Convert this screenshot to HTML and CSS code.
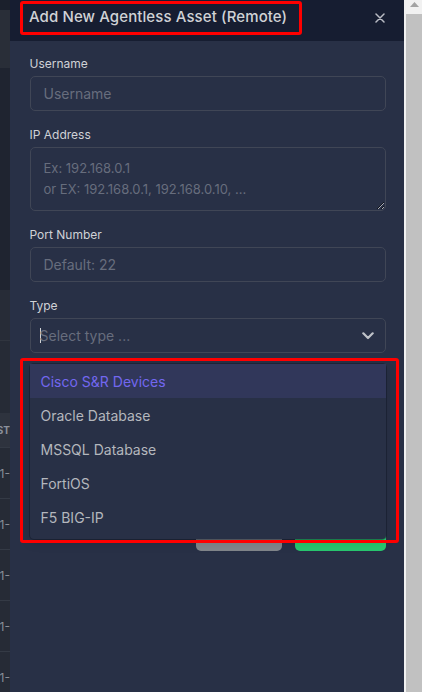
FILE: index.html
```html
<!DOCTYPE html>
<html lang="en">
<head>
<meta charset="utf-8">
<title>Add New Agentless Asset (Remote)</title>
<link rel="stylesheet" href="styles.css">
</head>
<body>
<div class="screen">
  <div class="bg-page">
    <div class="bg-top"></div>
    <div class="bg-bar"></div>
    <div class="bg-panel"></div>
    <div class="bg-sec1"></div>
    <div class="bg-sec2"></div>
    <div class="bg-th"><span>LAST</span></div>
    <div class="bg-row"><span>2023-11-</span></div>
    <div class="bg-row"><span>2023-11-</span></div>
    <div class="bg-row"><span>2023-11-</span></div>
    <div class="bg-row"><span>2023-11-</span></div>
    <div class="bg-row"><span>2023-11-</span></div>
  </div>

  <div class="modal">
    <div class="modal-header">
      <h5 class="modal-title">Add New Agentless Asset (Remote)</h5>
      <button class="close" type="button" aria-label="Close">
        <svg width="10" height="10" viewBox="0 0 10 10"><path d="M1 1L9 9M9 1L1 9" stroke="#b9bcc4" stroke-width="1.5" stroke-linecap="round"/></svg>
      </button>
    </div>
    <div class="modal-body">
      <div class="form-group">
        <label class="form-label">Username</label>
        <input class="form-control" type="text" placeholder="Username">
      </div>
      <div class="form-group">
        <label class="form-label">IP Address</label>
        <textarea class="form-control textarea" placeholder="Ex: 192.168.0.1&#10;or EX: 192.168.0.1, 192.168.0.10, ..."></textarea>
      </div>
      <div class="form-group">
        <label class="form-label">Port Number</label>
        <input class="form-control" type="text" placeholder="Default: 22">
      </div>
      <div class="form-group">
        <label class="form-label">Type</label>
        <div class="select">
          <span class="caret"></span>
          <span class="select-placeholder">Select type ...</span>
          <svg class="chevron" width="12" height="8" viewBox="0 0 12 8"><path d="M1.3 1.3L6 6L10.7 1.3" fill="none" stroke="#bfc2c8" stroke-width="2.2" stroke-linecap="round" stroke-linejoin="round"/></svg>
          <div class="menu">
            <div class="option option-active">Cisco S&amp;R Devices</div>
            <div class="option">Oracle Database</div>
            <div class="option">MSSQL Database</div>
            <div class="option">FortiOS</div>
            <div class="option">F5 BIG-IP</div>
          </div>
        </div>
      </div>
      <div class="form-actions">
        <button class="btn btn-secondary" type="button">Cancel</button>
        <button class="btn btn-success" type="button">Submit</button>
      </div>
    </div>
    <div class="annot annot-title"></div>
    <div class="annot annot-menu"></div>
  </div>

  <div class="scrollbar">
    <div class="sb-arrow"><svg width="9" height="5" viewBox="0 0 9 5"><path d="M0 5L4.5 0L9 5Z" fill="#a3a3a3"/></svg></div>
    <div class="sb-thumb"></div>
  </div>
</div>
</body>
</html>
```

FILE: styles.css
```css
* { box-sizing: border-box; }

html, body {
  margin: 0;
  padding: 0;
  overflow: hidden;
}

body {
  font-family: "Inter", "Open Sans", sans-serif;
  background: #161d31;
}

.screen {
  display: flex;
  height: 692px;
  width: 422px;
}

/* page visible behind the modal backdrop */
.bg-page {
  width: 10px;
  flex: 0 0 10px;
  display: flex;
  flex-direction: column;
  overflow: hidden;
  background: #232833;
}
.bg-page > div { flex-shrink: 0; }
.bg-top { height: 10px; background: #1b202c; }
.bg-bar { height: 58px; background: #292e38; }
.bg-panel { height: 222px; background: #1f2430; }
.bg-sec1 { height: 51px; background: #272c37; border-bottom: 1px solid #30353f; }
.bg-sec2 { height: 72px; background: #262b36; }
.bg-th,
.bg-row {
  display: flex;
  justify-content: flex-end;
  align-items: center;
  white-space: nowrap;
}
.bg-th {
  height: 34px;
  background: #2e333e;
  font-size: 10px;
  font-weight: 700;
  color: #8c919b;
}
.bg-row {
  height: 51px;
  border-top: 1px solid #343a45;
  background: #262b36;
  font-size: 12px;
  color: #8a8f98;
}

/* modal */
.modal {
  position: relative;
  width: 394px;
  flex: 0 0 394px;
  background: #283046;
  display: flex;
  flex-direction: column;
}

.modal-header {
  height: 41px;
  flex: 0 0 41px;
  background: #161d31;
  display: flex;
  align-items: flex-start;
  justify-content: space-between;
  padding: 7px 18px 0 19px;
}

.modal-title {
  margin: 0;
  font-size: 15px;
  line-height: 20px;
  font-weight: 500;
  color: #d0d2d6;
  letter-spacing: 0.1px;
}

.close {
  background: none;
  border: 0;
  padding: 0;
  margin: 6px 1px 0 0;
  width: 10px;
  height: 10px;
  display: flex;
  cursor: pointer;
}

.modal-body {
  padding: 14px 18.5px 0 19.5px;
  flex: 1;
}

.form-group {
  margin-bottom: 15px;
}

.form-label {
  display: block;
  font-size: 12px;
  line-height: 18px;
  margin-bottom: 3px;
  color: #d0d2d6;
}

.form-control {
  display: block;
  width: 100%;
  height: 35px;
  border: 1px solid #404656;
  border-radius: 5px;
  background: transparent;
  padding: 0 13px;
  font-family: inherit;
  font-size: 14px;
  color: #d0d2d6;
  outline: none;
}

.form-control::placeholder {
  color: #676d7d;
  opacity: 1;
}

.textarea {
  height: 64px;
  padding: 10px 13px;
  line-height: 21px;
  font-size: 13px;
  resize: vertical;
  color-scheme: dark;
}

.select {
  position: relative;
  height: 35px;
  border: 1px solid #404656;
  border-radius: 5px;
  display: flex;
  align-items: center;
  padding: 0 11px 0 9px;
}

.caret {
  width: 1px;
  height: 15px;
  background: #d0d2d6;
  margin-right: -1px;
}

.select-placeholder {
  flex: 1;
  font-size: 14px;
  color: #676d7d;
}

.chevron {
  display: block;
}

.menu {
  position: absolute;
  left: -1px;
  right: -1px;
  top: calc(100% + 12px);
  background: #283046;
  border-radius: 4px;
  padding: 0 0 5px;
  box-shadow: 0 0 0 1px rgba(10, 14, 25, 0.35), 0 4px 11px rgba(0, 0, 0, 0.12);
  z-index: 5;
}

.option {
  height: 34px;
  display: flex;
  align-items: center;
  padding: 0 11px;
  font-size: 14px;
  color: #b4b7bd;
}

.option-active {
  background: #31375a;
  color: #7367f0;
}

.form-actions {
  margin-top: 160px;
  display: flex;
  justify-content: flex-end;
  gap: 13px;
}

.btn {
  height: 38px;
  border: 0;
  border-radius: 5px;
  font-family: inherit;
  font-size: 14px;
  line-height: 16px;
  color: #fff;
  display: flex;
  align-items: flex-start;
  justify-content: center;
  padding: 6px 0 0;
}
.btn-secondary { width: 86px; background: #82868b; }
.btn-success { width: 91px; background: #28c76f; }

/* red annotation boxes drawn over the screenshot */
.annot {
  position: absolute;
  border: 3px solid #ff0000;
  border-radius: 3px;
  pointer-events: none;
  z-index: 10;
}
.annot-title {
  left: 10px;
  top: 1px;
  width: 282px;
  height: 34px;
}
.annot-menu {
  left: 10px;
  top: 358px;
  width: 379px;
  height: 185px;
}

/* fake scrollbar */
.scrollbar {
  width: 18px;
  flex: 0 0 18px;
  background: #f1f1f1;
  display: flex;
  flex-direction: column;
  padding-left: 2px;
}
.sb-arrow {
  height: 14px;
  display: flex;
  justify-content: center;
  padding-top: 2px;
}
.sb-arrow svg { display: block; }
.sb-thumb {
  flex: 1;
  background: #c1c1c1;
}
```
